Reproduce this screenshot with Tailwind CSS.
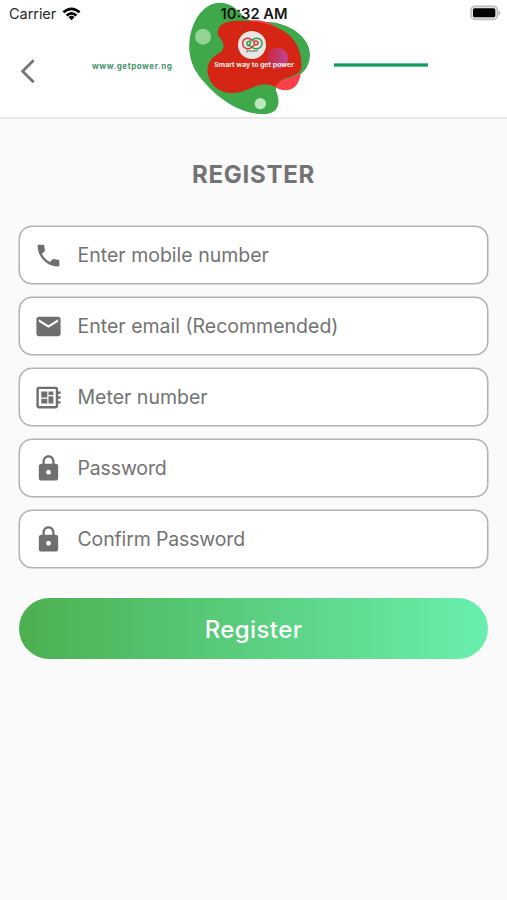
<!DOCTYPE html>
<html lang="en">
<head>
<meta charset="utf-8">
<title>Register</title>
<script src="https://cdn.jsdelivr.net/npm/@tailwindcss/browser@4"></script>
</head>
<body class="bg-[#fafafa] font-['Inter',sans-serif] text-[#737373]">
<div class="w-[507px] h-[900px] overflow-hidden flex flex-col">
  <header class="relative h-[119px] shrink-0 bg-white border-b-2 border-[#e9e9e9]">
    <div class="absolute left-[180px] top-0">
      <svg width="140" height="120" viewBox="0 0 420 360" class="block">
        <defs><linearGradient id="orb"><stop stop-color="#c8283c"/><stop offset="1" stop-color="#bf4590"/></linearGradient></defs>
        <path d="M28 150C24 77 65 9 118 8C154 8 171 29 190 48C206 64 225 67 264 66C326 68 390 111 390 164C388 203 369 221 342 234C314 244 292 248 287 270C295 286 298 306 293 319C285 341 261 345 230 341C175 335 113 294 77 251C44 217 31 187 28 150Z" fill="#3fa84a"/>
        <path d="M205 62C240 58 270 65 290 84L250 84Z" fill="#f0404a"/>
        <path d="M116 87C119 69 145 63 174 62C225 61 280 73 315 96C349 118 367 158 364 202C361 225 331 229 310 238C300 243 294 252 285 261C269 250 248 253 230 257C200 270 184 279 151 279C116 277 87 252 83 218C80 193 93 172 117 160C137 147 132 130 122 116C112 105 111 96 116 87Z" fill="#d42515"/>
        <path d="M286 261C294 247 303 240 325 235C346 229 357 225 363 214C360 244 349 267 324 270C308 272 294 267 286 261Z" fill="#fb4048"/>
        <circle cx="292" cy="175" r="32" fill="url(#orb)"/>
        <circle cx="69" cy="110" r="24" fill="#91d493"/>
        <circle cx="241" cy="311" r="17" fill="#bce9bb"/>
        <circle cx="216" cy="135" r="42" fill="#e9e7e5"/>
        <g fill="none" stroke-width="4.500" stroke-linecap="round" stroke-linejoin="round">
          <path d="M216 121C207 110 188 114 188 130C188 147 207 151 216 141" stroke="#d93b38"/>
          <path d="M216 121C226 110 246 114 246 130C246 147 226 151 216 141" stroke="#2e9f50"/>
          <path d="M200 130Q202 122 211 124Q213 134 204 137ZM203 134L216 142" stroke="#2e9f50"/>
          <path d="M221 124Q232 121 235 129Q232 137 224 134ZM224 133L216 141" stroke="#d93b38"/>
        </g>
        <text x="216" y="157" text-anchor="middle" font-size="8" font-weight="700" fill="#577d58" textLength="36">getpower</text>
        <text x="103" y="200" font-size="20" font-weight="700" fill="#fff0e9" textLength="239" lengthAdjust="spacingAndGlyphs">Smart way to get power</text>
      </svg>
    </div>
    <div class="absolute left-[9px] top-[4px] flex items-center gap-[6px] text-[#292929]">
      <span class="text-[14.5px] leading-5 tracking-[-0.05px]">Carrier</span>
      <svg width="19" height="15" viewBox="0 0 20 15" fill="none" stroke="#000" stroke-width="2.8"><path d="M1.500 5.200Q10 -2.200 18.500 5.200M4.800 8.600Q10 4 15.200 8.600"/><path d="M6.800 10.200Q10 7.400 13.200 10.200L10 13.600Z" fill="#000" stroke="none"/></svg>
    </div>
    <div class="absolute left-0 right-0 top-[4px] pl-[1px] text-center text-[14.7px] leading-5 font-semibold text-[#151515]">10:32 AM</div>
    <svg class="absolute left-[470px] top-[5px]" width="32" height="16" viewBox="0 0 32 16"><rect x="1" y="1.2" width="26.500" height="13.200" rx="4" fill="#e4e4e4" stroke="#bdbdbd" stroke-width="1.6"/><rect x="3" y="3.300" width="22.300" height="9" rx="1.600" fill="#000"/><path d="M28.600 5.500Q32 8 28.600 10.500Z" fill="#aaa"/></svg>
    <svg class="absolute left-[18px] top-[58px]" width="20" height="27" viewBox="0 0 20 27" fill="none" stroke="#767676" stroke-width="2.8"><path d="M15.700 2.300L4.600 13.300L15.700 24.300"/></svg>
    <div class="absolute left-[92px] top-[60px] text-[8px] leading-3 font-bold tracking-[0.56px] text-[#45936d]">www.getpower.ng</div>
    <div class="absolute left-[334px] top-[63px] w-[94px] h-[4px] bg-[#129d5d] border-y border-[#65c397]"></div>
  </header>
  <main class="px-[19px] flex flex-col">
    <h1 class="mt-[40px] h-8 leading-8 text-center text-[24px] font-bold tracking-[0.7px]">REGISTER</h1>
    <form class="mt-[35px] flex flex-col gap-[13px]">
      <label class="h-[58px] flex items-center gap-[15px] pl-[13.5px] rounded-[13px] border border-[#b2b2b2] ring-[0.5px] ring-[#b2b2b2] bg-white text-[19.5px]">
        <svg width="29" height="29" viewBox="0 0 24 24" fill="#6f6f6f"><path d="M20 15.5c-1.25 0-2.45-.2-3.57-.57-.35-.11-.74-.03-1.02.24l-2.2 2.2c-2.83-1.44-5.15-3.75-6.59-6.59l2.2-2.21c.28-.26.36-.65.25-1C8.7 6.45 8.5 5.25 8.5 4c0-.55-.45-1-1-1H4c-.55 0-1 .45-1 1 0 9.39 7.61 17 17 17 .55 0 1-.45 1-1v-3.500c0-.55-.45-1-1-1z"/></svg>
        <span class="pt-px">Enter mobile number</span>
      </label>
      <label class="h-[58px] flex items-center gap-[15px] pl-[13.5px] rounded-[13px] border border-[#b2b2b2] ring-[0.5px] ring-[#b2b2b2] bg-white text-[19.5px]">
        <svg width="29" height="29" viewBox="0 0 24 24" fill="#6f6f6f"><path d="M20 4H4c-1.100 0-2 .9-2 2v12c0 1.100.9 2 2 2h16c1.100 0 2-.9 2-2V6c0-1.100-.9-2-2-2zm0 4l-8 5-8-5V6l8 5 8-5v2z"/></svg>
        <span class="pt-px">Enter email (Recommended)</span>
      </label>
      <label class="h-[58px] flex items-center gap-[15px] pl-[13.5px] rounded-[13px] border border-[#b2b2b2] ring-[0.5px] ring-[#b2b2b2] bg-white text-[19.5px]">
        <svg width="29" height="29" viewBox="0 0 24 24" fill="#6f6f6f"><path d="M22 9V7h-2V5c0-1.100-.9-2-2-2H4c-1.100 0-2 .9-2 2v14c0 1.100.9 2 2 2h14c1.100 0 2-.9 2-2v-2h2v-2h-2v-2h2v-2h-2V9h2zm-4 10H4V5h14v14zM6 13h5v4H6zm6-6h4v3h-4zM6 7h5v5H6zm6 4h4v6h-4z"/></svg>
        <span class="pt-px">Meter number</span>
      </label>
      <label class="h-[58px] flex items-center gap-[15px] pl-[13.5px] rounded-[13px] border border-[#b2b2b2] ring-[0.5px] ring-[#b2b2b2] bg-white text-[19.5px]">
        <svg width="29" height="29" viewBox="0 0 24 24" fill="#6f6f6f"><path d="M18 8h-1V6c0-2.760-2.240-5-5-5S7 3.240 7 6v2H6c-1.100 0-2 .9-2 2v10c0 1.100.9 2 2 2h12c1.100 0 2-.9 2-2V10c0-1.100-.9-2-2-2zm-6 9c-1.100 0-2-.9-2-2s.9-2 2-2 2 .9 2 2-.9 2-2 2zm3.100-9H8.900V6c0-1.710 1.390-3.100 3.100-3.100s3.100 1.390 3.100 3.100v2z"/></svg>
        <span class="pt-px tracking-[-0.15px]">Password</span>
      </label>
      <label class="h-[58px] flex items-center gap-[15px] pl-[13.5px] rounded-[13px] border border-[#b2b2b2] ring-[0.5px] ring-[#b2b2b2] bg-white text-[19.5px]">
        <svg width="29" height="29" viewBox="0 0 24 24" fill="#6f6f6f"><path d="M18 8h-1V6c0-2.760-2.240-5-5-5S7 3.240 7 6v2H6c-1.100 0-2 .9-2 2v10c0 1.100.9 2 2 2h12c1.100 0 2-.9 2-2V10c0-1.100-.9-2-2-2zm-6 9c-1.100 0-2-.9-2-2s.9-2 2-2 2 .9 2 2-.9 2-2 2zm3.100-9H8.900V6c0-1.710 1.390-3.100 3.100-3.100s3.100 1.390 3.100 3.100v2z"/></svg>
        <span class="pt-px tracking-[-0.15px]">Confirm Password</span>
      </label>
      <button type="button" class="mt-[17px] h-[61px] rounded-full bg-linear-to-r from-[#4caf50] to-[#69f0ae] pt-[2px] text-white text-[24px] font-medium tracking-[0.4px]">Register</button>
    </form>
  </main>
</div>
</body>
</html>
